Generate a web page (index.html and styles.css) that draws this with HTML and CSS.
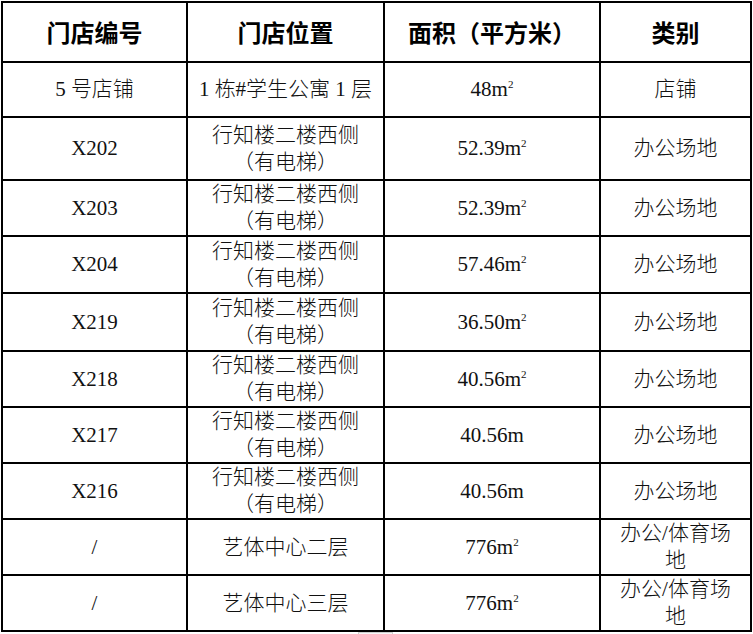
FILE: index.html
```html
<!DOCTYPE html>
<html lang="zh-CN">
<head>
<meta charset="utf-8">
<title>门店列表</title>
<link rel="stylesheet" href="styles.css">
</head>
<body>
<table class="grid">
  <colgroup>
    <col class="c1"><col class="c2"><col class="c3"><col class="c4">
  </colgroup>
  <thead>
    <tr class="h58"><th>门店编号</th><th>门店位置</th><th>面积（平方米）</th><th>类别</th></tr>
  </thead>
  <tbody>
    <tr class="h53"><td>5 号店铺</td><td>1 栋#学生公寓 1 层</td><td>48m<sup>2</sup></td><td>店铺</td></tr>
    <tr class="h61"><td>X202</td><td><span class="ln">行知楼二楼西侧</span><span class="ln"><span class="op">（</span>有电梯）</span></td><td>52.39m<sup>2</sup></td><td>办公场地</td></tr>
    <tr class="h54"><td>X203</td><td><span class="ln">行知楼二楼西侧</span><span class="ln"><span class="op">（</span>有电梯）</span></td><td>52.39m<sup>2</sup></td><td>办公场地</td></tr>
    <tr class="h55"><td>X204</td><td><span class="ln">行知楼二楼西侧</span><span class="ln"><span class="op">（</span>有电梯）</span></td><td>57.46m<sup>2</sup></td><td>办公场地</td></tr>
    <tr class="h56"><td>X219</td><td><span class="ln">行知楼二楼西侧</span><span class="ln"><span class="op">（</span>有电梯）</span></td><td>36.50m<sup>2</sup></td><td>办公场地</td></tr>
    <tr class="h53"><td>X218</td><td><span class="ln">行知楼二楼西侧</span><span class="ln"><span class="op">（</span>有电梯）</span></td><td>40.56m<sup>2</sup></td><td>办公场地</td></tr>
    <tr class="h54"><td>X217</td><td><span class="ln">行知楼二楼西侧</span><span class="ln"><span class="op">（</span>有电梯）</span></td><td>40.56m</td><td>办公场地</td></tr>
    <tr class="h54"><td>X216</td><td><span class="ln">行知楼二楼西侧</span><span class="ln"><span class="op">（</span>有电梯）</span></td><td>40.56m</td><td>办公场地</td></tr>
    <tr class="h54"><td>/</td><td>艺体中心二层</td><td>776m<sup>2</sup></td><td><span class="ln">办公/体育场</span><span class="ln">地</span></td></tr>
    <tr class="h54"><td>/</td><td>艺体中心三层</td><td>776m<sup>2</sup></td><td><span class="ln">办公/体育场</span><span class="ln">地</span></td></tr>
  </tbody>
</table>
<div class="tab-stub"></div>
</body>
</html>
```

FILE: styles.css
```css
html, body {
  margin: 0;
  padding: 0;
  background: #fff;
}

body {
  font-family: "Liberation Serif", "Noto Sans CJK SC", serif;
  color: #000;
  overflow: hidden;
}

.grid {
  margin: 1px 0 0 1px;
  border-collapse: separate;
  border-spacing: 2px;
  background: #000;
  table-layout: fixed;
  width: 751px;
}

.c1 { width: 183px; }
.c2 { width: 195px; }
.c3 { width: 214px; }
.c4 { width: 149px; }

.grid th,
.grid td {
  background: #fff;
  padding: 0;
  text-align: center;
  vertical-align: middle;
}

.grid th {
  font-family: "Noto Sans CJK SC", sans-serif;
  font-weight: 700;
  font-size: 24px;
  line-height: 28px;
}

.grid td {
  font-size: 21px;
  font-weight: 300;
  line-height: 27px;
  color: #111;
}

.ln {
  display: block;
}

.op {
  display: inline-block;
  width: 1em;
  text-align: right;
}

.grid sup {
  font-size: 11px;
  line-height: 0;
  vertical-align: 8px;
}

.h58 { height: 58px; }
.h53 { height: 53px; }
.h54 { height: 54px; }
.h55 { height: 55px; }
.h56 { height: 56px; }
.h61 { height: 61px; }

.tab-stub {
  margin: 0 0 0 358px;
  width: 33px;
  height: 6px;
  border: 1px solid #d0d0d0;
  border-bottom: none;
  background: #f7f7f7;
}
```
